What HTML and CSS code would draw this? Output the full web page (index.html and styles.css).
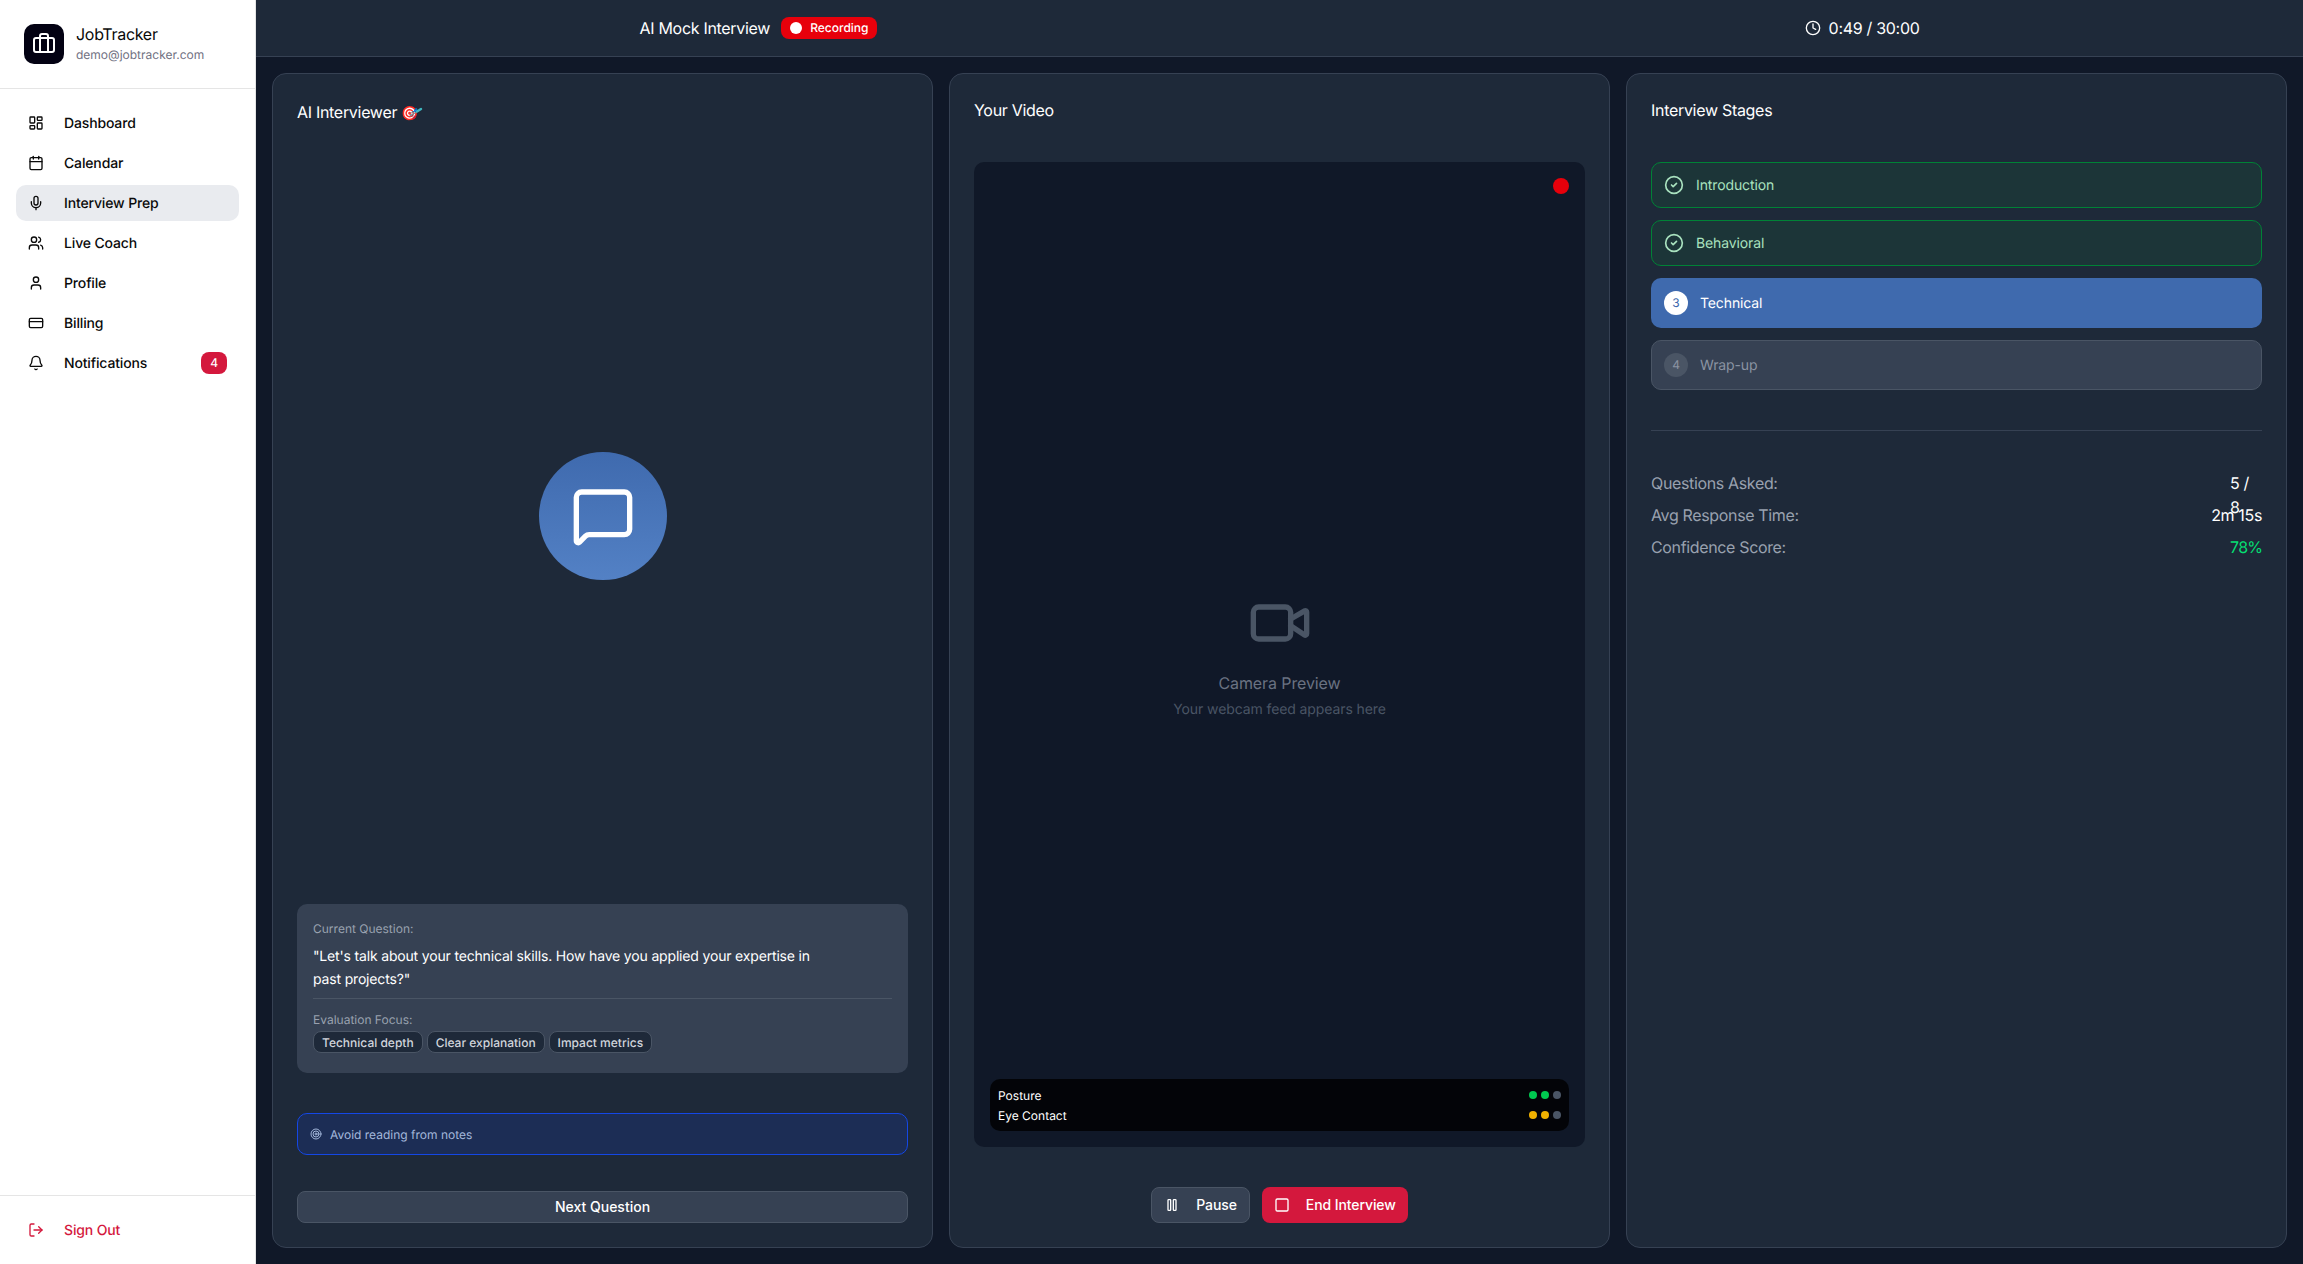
FILE: index.html
```html
<!DOCTYPE html>
<html lang="en">
<head>
    <meta charset="UTF-8">
    <title>JobTracker - AI Mock Interview</title>
    <link rel="stylesheet" href="styles.css">
</head>
<body>
    <div class="app">
        <aside class="sidebar">
            <div class="brand">
                <div class="brand-logo">
                    <svg class="icon-24" viewBox="0 0 24 24"><path d="M16 20V4a2 2 0 0 0-2-2h-4a2 2 0 0 0-2 2v16"/><rect width="20" height="14" x="2" y="6" rx="2"/></svg>
                </div>
                <div class="brand-text">
                    <div class="brand-name">JobTracker</div>
                    <div class="brand-email">demo@jobtracker.com</div>
                </div>
            </div>
            <nav class="nav">
                <a class="nav-item">
                    <svg class="icon-16" viewBox="0 0 24 24"><rect width="7" height="9" x="3" y="3" rx="1"/><rect width="7" height="5" x="14" y="3" rx="1"/><rect width="7" height="9" x="14" y="12" rx="1"/><rect width="7" height="5" x="3" y="16" rx="1"/></svg>
                    <span class="label">Dashboard</span>
                </a>
                <a class="nav-item">
                    <svg class="icon-16" viewBox="0 0 24 24"><path d="M8 2v4"/><path d="M16 2v4"/><rect width="18" height="18" x="3" y="4" rx="2"/><path d="M3 10h18"/></svg>
                    <span class="label">Calendar</span>
                </a>
                <a class="nav-item active">
                    <svg class="icon-16" viewBox="0 0 24 24"><path d="M12 19v3"/><path d="M19 10v2a7 7 0 0 1-14 0v-2"/><rect x="9" y="2" width="6" height="13" rx="3"/></svg>
                    <span class="label">Interview Prep</span>
                </a>
                <a class="nav-item">
                    <svg class="icon-16" viewBox="0 0 24 24"><path d="M16 21v-2a4 4 0 0 0-4-4H6a4 4 0 0 0-4 4v2"/><path d="M16 3.128a4 4 0 0 1 0 7.744"/><path d="M22 21v-2a4 4 0 0 0-3-3.87"/><circle cx="9" cy="7" r="4"/></svg>
                    <span class="label">Live Coach</span>
                </a>
                <a class="nav-item">
                    <svg class="icon-16" viewBox="0 0 24 24"><path d="M19 21v-2a4 4 0 0 0-4-4H9a4 4 0 0 0-4 4v2"/><circle cx="12" cy="7" r="4"/></svg>
                    <span class="label">Profile</span>
                </a>
                <a class="nav-item">
                    <svg class="icon-16" viewBox="0 0 24 24"><rect width="20" height="14" x="2" y="5" rx="2"/><path d="M2 10h20"/></svg>
                    <span class="label">Billing</span>
                </a>
                <a class="nav-item">
                    <svg class="icon-16" viewBox="0 0 24 24"><path d="M10.268 21a2 2 0 0 0 3.464 0"/><path d="M3.262 15.326A1 1 0 0 0 4 17h16a1 1 0 0 0 .74-1.673C19.41 13.956 18 12.499 18 8A6 6 0 0 0 6 8c0 4.499-1.411 5.956-2.738 7.326"/></svg>
                    <span class="label">Notifications</span>
                    <span class="nav-badge">4</span>
                </a>
            </nav>
            <div class="sidebar-footer">
                <a class="nav-item sign-out">
                    <svg class="icon-16" viewBox="0 0 24 24"><path d="m16 17 5-5-5-5"/><path d="M21 12H9"/><path d="M9 21H5a2 2 0 0 1-2-2V5a2 2 0 0 1 2-2h4"/></svg>
                    <span class="label">Sign Out</span>
                </a>
            </div>
        </aside>

        <div class="content">
            <header class="topbar">
                <div class="topbar-inner">
                    <div class="topbar-title">
                        <span>AI Mock Interview</span>
                        <span class="rec-badge"><span class="rec-dot"></span>Recording</span>
                    </div>
                    <div class="timer">
                        <svg class="icon-16" viewBox="0 0 24 24"><circle cx="12" cy="12" r="10"/><path d="M12 6v6l4 2"/></svg>
                        <span>0:49 / 30:00</span>
                    </div>
                </div>
            </header>

            <main class="panels">
                <section class="panel">
                    <h2 class="panel-title ai-title">AI Interviewer <span class="emoji">🎯<svg class="dart" viewBox="0 0 14 10"><path d="M1 9 9 4"/><path class="dart-tail" d="M8 4.5 12 2"/></svg></span></h2>
                    <div class="avatar-area">
                        <div class="avatar">
                            <svg class="icon-64" viewBox="0 0 24 24"><path d="M22 17a2 2 0 0 1-2 2H6.828a2 2 0 0 0-1.414.586l-2.202 2.202A.71.71 0 0 1 2 21.286V5a2 2 0 0 1 2-2h16a2 2 0 0 1 2 2z"/></svg>
                        </div>
                    </div>
                    <div class="question-card">
                        <div class="small-label">Current Question:</div>
                        <p class="question-text">"Let's talk about your technical skills. How have you applied your expertise in past projects?"</p>
                        <div class="focus">
                            <div class="small-label">Evaluation Focus:</div>
                            <div class="chips">
                                <span class="chip">Technical depth</span>
                                <span class="chip">Clear explanation</span>
                                <span class="chip">Impact metrics</span>
                            </div>
                        </div>
                    </div>
                    <div class="tip">
                        <svg class="icon-12" viewBox="0 0 24 24"><circle cx="12" cy="12" r="10"/><circle cx="12" cy="12" r="6"/><circle cx="12" cy="12" r="2"/></svg>
                        <span class="label">Avoid reading from notes</span>
                    </div>
                    <button class="next-btn">Next Question</button>
                </section>

                <section class="panel">
                    <h2 class="panel-title">Your Video</h2>
                    <div class="video-box">
                        <span class="video-rec"></span>
                        <div class="video-empty">
                            <svg class="icon-64" viewBox="0 0 24 24"><path d="m16 13 5.223 3.482a.5.5 0 0 0 .777-.416V7.87a.5.5 0 0 0-.752-.432L16 10.5"/><rect x="2" y="6" width="14" height="12" rx="2"/></svg>
                            <div class="video-empty-title">Camera Preview</div>
                            <div class="video-empty-sub">Your webcam feed appears here</div>
                        </div>
                        <div class="video-meters">
                            <div class="meter">
                                <span class="label">Posture</span>
                                <span class="dots"><i class="dot green"></i><i class="dot green"></i><i class="dot"></i></span>
                            </div>
                            <div class="meter">
                                <span class="label">Eye Contact</span>
                                <span class="dots"><i class="dot yellow"></i><i class="dot yellow"></i><i class="dot"></i></span>
                            </div>
                        </div>
                    </div>
                    <div class="video-actions">
                        <button class="action-btn pause">
                            <svg class="icon-16" viewBox="0 0 24 24"><rect x="14" y="4" width="4" height="16" rx="1"/><rect x="6" y="4" width="4" height="16" rx="1"/></svg>
                            Pause
                        </button>
                        <button class="action-btn end">
                            <svg class="icon-16" viewBox="0 0 24 24"><rect width="18" height="18" x="3" y="3" rx="2"/></svg>
                            End Interview
                        </button>
                    </div>
                </section>

                <section class="panel">
                    <h2 class="panel-title">Interview Stages</h2>
                    <div class="stages">
                        <div class="stage done">
                            <svg class="icon-20" viewBox="0 0 24 24"><circle cx="12" cy="12" r="10"/><path d="m9 12 2 2 4-4"/></svg>
                            <span class="label">Introduction</span>
                        </div>
                        <div class="stage done">
                            <svg class="icon-20" viewBox="0 0 24 24"><circle cx="12" cy="12" r="10"/><path d="m9 12 2 2 4-4"/></svg>
                            <span class="label">Behavioral</span>
                        </div>
                        <div class="stage current">
                            <span class="stage-num">3</span>
                            <span class="label">Technical</span>
                        </div>
                        <div class="stage upcoming">
                            <span class="stage-num">4</span>
                            <span class="label">Wrap-up</span>
                        </div>
                    </div>
                    <div class="stats">
                        <div class="stat">
                            <span>Questions Asked:</span>
                            <span class="stat-value narrow">5 / 8</span>
                        </div>
                        <div class="stat">
                            <span>Avg Response Time:</span>
                            <span class="stat-value">2m 15s</span>
                        </div>
                        <div class="stat">
                            <span>Confidence Score:</span>
                            <span class="stat-value narrow score">78%</span>
                        </div>
                    </div>
                </section>
            </main>
        </div>
    </div>
</body>
</html>
```

FILE: styles.css
```css
* {
    margin: 0;
    padding: 0;
    box-sizing: border-box;
}

body {
    font-family: Inter, 'Noto Sans', sans-serif;
    font-size: 14px;
    line-height: 20px;
    text-rendering: geometricPrecision;
    background: #101828;
    color: #fff;
    overflow: hidden;
}

svg {
    fill: none;
    stroke: currentColor;
    stroke-width: 2;
    stroke-linecap: round;
    stroke-linejoin: round;
    flex-shrink: 0;
    display: block;
}

.icon-12 { width: 12px; height: 12px; }
.icon-16 { width: 16px; height: 16px; }
.icon-20 { width: 20px; height: 20px; }
.icon-24 { width: 24px; height: 24px; }
.icon-64 { width: 64px; height: 64px; }

/* text sits a touch low next to the icons */
.label {
    padding-top: 2px;
    line-height: 16px;
}

.app {
    display: flex;
    height: 100vh;
}

/* sidebar */
.sidebar {
    width: 256px;
    flex-shrink: 0;
    display: flex;
    flex-direction: column;
    background: #fff;
    border-right: 1px solid #e5e5e5;
    color: #0a0a0a;
}

.brand {
    display: flex;
    align-items: center;
    gap: 12px;
    padding: 24px;
    height: 89px;
    border-bottom: 1px solid #e5e5e5;
}

.brand-logo {
    width: 40px;
    height: 40px;
    border-radius: 10px;
    background: #030213;
    color: #fff;
    display: flex;
    align-items: center;
    justify-content: center;
}

.brand-text {
    padding-bottom: 2px;
}

.brand-name {
    font-size: 16px;
    line-height: 20px;
    letter-spacing: -0.3px;
}

.brand-email {
    margin-top: 3px;
    font-size: 12px;
    line-height: 16px;
    color: #717182;
}

.nav {
    flex: 1;
    display: flex;
    flex-direction: column;
    gap: 4px;
    padding: 16px;
}

.nav-item {
    display: flex;
    align-items: center;
    gap: 20px;
    height: 36px;
    padding: 0 12px;
    border-radius: 10px;
    font-weight: 500;
    letter-spacing: -0.15px;
}

.nav-item.active {
    background: #e9ebef;
}

.nav-badge {
    margin-left: auto;
    width: 26px;
    height: 22px;
    border-radius: 8px;
    background: #d4183d;
    color: #fff;
    font-size: 12px;
    line-height: 22px;
    text-align: center;
}

.sidebar-footer {
    padding: 16px;
    border-top: 1px solid #e5e5e5;
}

.sign-out {
    color: #d4183d;
}

/* top bar */
.content {
    flex: 1;
    min-width: 0;
    display: flex;
    flex-direction: column;
}

.topbar {
    height: 57px;
    flex-shrink: 0;
    background: #1e2939;
    border-bottom: 1px solid #364153;
}

.topbar-inner {
    max-width: 1280px;
    height: 100%;
    margin: 0 auto;
    display: flex;
    justify-content: space-between;
    align-items: center;
    font-size: 16px;
    letter-spacing: -0.3px;
}

.topbar-title {
    display: flex;
    align-items: center;
    gap: 11px;
}

.rec-badge {
    display: flex;
    align-items: center;
    gap: 8px;
    height: 22px;
    padding: 0 9px;
    border-radius: 8px;
    background: #e7000b;
    font-size: 12px;
    font-weight: 500;
    letter-spacing: 0;
}

.rec-dot {
    width: 12px;
    height: 12px;
    border-radius: 50%;
    background: #fff;
}

.timer {
    display: flex;
    align-items: center;
    gap: 8px;
}

/* panels */
.panels {
    flex: 1;
    min-height: 0;
    display: grid;
    grid-template-columns: repeat(3, 1fr);
    gap: 16px;
    padding: 16px;
}

.panel {
    display: flex;
    flex-direction: column;
    min-width: 0;
    padding: 24px;
    background: #1e2939;
    border: 1px solid #364153;
    border-radius: 14px;
}

.panel-title {
    font-size: 16px;
    font-weight: 400;
    line-height: 24px;
    letter-spacing: -0.3px;
    margin-bottom: 40px;
}

.ai-title {
    line-height: 28px;
    margin-bottom: 0;
}

.emoji {
    position: relative;
    display: inline-block;
    font-size: 14px;
}

/* the installed emoji has no dart in the board */
.dart {
    position: absolute;
    left: 8px;
    top: 7px;
    width: 14px;
    height: 10px;
    stroke: #6d8f9c;
    stroke-width: 1.2;
}

.dart-tail {
    stroke: #3fb8c0;
    stroke-width: 2.4;
}

.avatar-area {
    flex: 1;
    display: flex;
    align-items: center;
    justify-content: center;
}

.avatar {
    width: 128px;
    height: 128px;
    border-radius: 50%;
    background: linear-gradient(180deg, #3f6aae, #5381c5);
    display: flex;
    align-items: center;
    justify-content: center;
}

.question-card {
    padding: 16px;
    border-radius: 10px;
    background: #364153;
    margin-bottom: 40px;
}

.small-label {
    padding-top: 1px;
    font-size: 12px;
    line-height: 16px;
    color: #99a1af;
}

.question-text {
    max-width: 512px;
    margin-top: 8px;
    line-height: 23px;
    letter-spacing: -0.17px;
}

.focus {
    margin-top: 7px;
    padding-top: 12px;
    border-top: 1px solid #4a5565;
}

.chips {
    display: flex;
    gap: 4px;
    margin-top: 3px;
    margin-bottom: 4px;
}

.chip {
    height: 22px;
    padding: 1px 8px 0;
    border: 1px solid #4a5565;
    border-radius: 8px;
    background: #1e2939;
    color: #d1d5dc;
    font-size: 12px;
    line-height: 20px;
    font-weight: 500;
}

.tip {
    display: flex;
    align-items: center;
    gap: 8px;
    height: 42px;
    padding: 0 12px;
    border: 1px solid #1447e6;
    border-radius: 10px;
    background: #1c2d55;
    color: #a4b8dc;
    font-size: 12px;
    margin-bottom: 36px;
}

.next-btn {
    height: 32px;
    border: 1px solid #4a5565;
    border-radius: 8px;
    background: #364153;
    color: #fff;
    font: 500 14px/20px Inter, sans-serif;
}

/* video */
.video-box {
    flex: 1;
    min-height: 0;
    position: relative;
    display: flex;
    align-items: center;
    justify-content: center;
    border-radius: 10px;
    background: #101828;
}

.video-rec {
    position: absolute;
    top: 16px;
    right: 16px;
    width: 16px;
    height: 16px;
    border-radius: 50%;
    background: #e7000b;
}

.video-empty {
    display: flex;
    flex-direction: column;
    align-items: center;
    padding-top: 2px;
    color: #4a5565;
}

.video-empty-title {
    margin-top: 16px;
    font-size: 16px;
    line-height: 24px;
    color: #6a7282;
    letter-spacing: -0.1px;
}

.video-empty-sub {
    margin-top: 5px;
    letter-spacing: -0.1px;
}

.video-meters {
    position: absolute;
    left: 16px;
    right: 16px;
    bottom: 16px;
    display: flex;
    flex-direction: column;
    gap: 4px;
    padding: 8px;
    border-radius: 10px;
    background: rgba(0, 0, 0, 0.8);
    font-size: 12px;
    line-height: 16px;
}

.meter {
    display: flex;
    justify-content: space-between;
    align-items: center;
    height: 16px;
}

.dots {
    display: flex;
    gap: 4px;
}

.dot {
    width: 8px;
    height: 8px;
    border-radius: 50%;
    background: #4a5565;
}

.dot.green { background: #00c950; }
.dot.yellow { background: #f0b100; }

.video-actions {
    display: flex;
    justify-content: center;
    gap: 12px;
    margin-top: 40px;
}

.action-btn {
    display: flex;
    align-items: center;
    gap: 16px;
    height: 36px;
    padding: 0 12px;
    border: 0;
    border-radius: 8px;
    color: #fff;
    font: 500 14px/20px Inter, sans-serif;
    letter-spacing: -0.1px;
}

.action-btn.pause {
    background: #364153;
    border: 1px solid #4a5565;
}

.action-btn.end {
    background: #d4183d;
}

/* stages */
.stages {
    display: flex;
    flex-direction: column;
    gap: 12px;
}

.stage {
    display: flex;
    align-items: center;
    gap: 12px;
    padding: 12px;
    border: 1px solid transparent;
    border-radius: 10px;
    letter-spacing: -0.12px;
}

.stage.done {
    background: #1c3538;
    border-color: #008236;
    color: #a9e2bf;
}

.stage.current {
    background: #3f6aae;
}

.stage.upcoming {
    background: #364153;
    border-color: #4a5565;
    color: #8a93a2;
}

.stage-num {
    width: 24px;
    height: 24px;
    border-radius: 50%;
    font-size: 12px;
    line-height: 24px;
    text-align: center;
}

.current .stage-num {
    background: #fff;
    color: #3f6aae;
}

.upcoming .stage-num {
    background: #4a5565;
}

.stats {
    margin-top: 40px;
    padding-top: 40px;
    border-top: 1px solid #364153;
    display: flex;
    flex-direction: column;
    gap: 8px;
    font-size: 16px;
    line-height: 24px;
    letter-spacing: -0.35px;
    color: #99a1af;
}

.stat {
    display: flex;
    justify-content: space-between;
    height: 24px;
}

.stat-value {
    color: #fff;
}

.stat-value.narrow {
    width: 32px;
}

.stat-value.score {
    color: #05df72;
    letter-spacing: -0.7px;
}
```
